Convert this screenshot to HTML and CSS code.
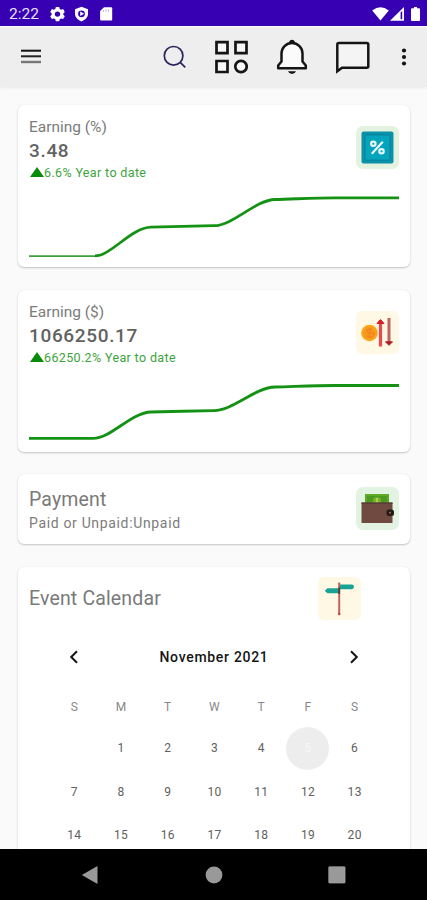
FILE: index.html
```html
<!DOCTYPE html>
<html lang="en">
<head>
<meta charset="utf-8">
<title>Dashboard</title>
<link rel="stylesheet" href="styles.css">
</head>
<body>
<div class="screen">
  <header class="status">
    <span class="clock">2:22</span>
    <svg class="status-left" width="64" height="16" viewBox="0 0 64 16" fill="#fff">
      <path fill-rule="evenodd" d="M5.800 1h3.400l.5 2 1.400.8 2-.7L14.800 6l-1.500 1.400v1.400l1.500 1.400-1.700 2.800-2-.6-1.400.8-.5 2H5.800l-.5-2-1.400-.8-2 .6L.2 10.200l1.500-1.400V7.400L.2 6l1.700-2.900 2 .7L5.300 3zM7.500 5.400a2.700 2.700 0 1 0 0 5.400 2.700 2.700 0 0 0 0-5.400z"/>
      <path fill-rule="evenodd" d="M31.500 .8 38 3.200v4.600c0 3.500-2.700 6-6.500 7.600C27.700 13.800 25 11.300 25 7.800V3.200zM31.500 4.400a3.400 3.400 0 1 0 0 6.800 3.400 3.400 0 0 0 0-6.800z"/>
      <path d="M30.200 5.500v4.600l3.900-2.300z"/>
      <path d="M54 1.200h7.200q1 0 1 1v11.400q0 1-1 1H51.100q-1 0-1-1V5z"/>
      <path d="M53.400 4v2M56 3.300v2.500M58.500 3.300v2.500" stroke="#3700b3" stroke-width=".7" opacity=".4"/>
    </svg>
    <svg class="status-right" width="50" height="16" viewBox="0 0 50 16" fill="#fff">
      <path d="M.2 4.500Q8.500-2 16.800 4.500L8.500 14.500z"/>
      <path d="M18 14.800 32 1v13.800z"/>
      <path d="M28.600 6.500v6.800h1.600v-8.300z" fill="#3700b3"/>
      <path d="M42 1h3v1.200h2q1 0 1 1V14q0 1-1 1h-7q-1 0-1-1V3.200q0-1 1-1h2z"/>
    </svg>
  </header>

  <nav class="appbar">
    <svg class="menu" width="20" height="16" viewBox="0 0 20 16"><path d="M0 1.700h20" stroke="#111" stroke-width="2"/><path d="M0 7.300h20" stroke="#222" stroke-width="2"/><path d="M0 13h20" stroke="#777" stroke-width="2.400"/></svg>
    <svg class="search" width="24" height="24" viewBox="0 0 24 24" fill="none" stroke="#29265c" stroke-width="1.700"><circle cx="10.600" cy="10.800" r="9.300"/><path d="m17.200 17.400 5 5"/></svg>
    <svg class="apps" width="34" height="34" viewBox="0 0 34 34" fill="#f7f7f7" stroke="#151515" stroke-width="2.700"><path d="M2.500 2.200h11v11h-11zM21.500 2.200h11v11h-11zM2.500 21h11v11h-11z"/><circle cx="27" cy="26.500" r="5.700"/></svg>
    <svg class="bell" width="32" height="36" viewBox="0 0 32 36"><path d="M12.800 3.200Q14 .8 16 .8t3.200 2.400zM12 32.300h8Q19 35 16 35t-4-2.700z" fill="#151515"/><path d="M2.200 29.200v-2.700l3.300-4V14.500a10.500 10.500 0 0 1 21 0v8l3.300 4v2.700z" fill="#fbfbfb" stroke="#151515" stroke-width="2.500" stroke-linejoin="round"/></svg>
    <svg class="chat" width="36" height="34" viewBox="0 0 36 34"><path d="M2.300 30.300V3.500q0-1.500 1.500-1.500h28q1.500 0 1.500 1.500v21.700q0 1.500-1.500 1.500H7z" fill="#f4f4f4" stroke="#151515" stroke-width="2.500"/></svg>
    <svg class="more" width="6" height="20" viewBox="0 0 6 20" fill="#151515"><circle cx="3" cy="3.500" r="2.100"/><circle cx="3" cy="10" r="2.100"/><circle cx="3" cy="16.500" r="2.100"/></svg>
  </nav>

  <main class="content">
    <section class="card earning">
      <div class="card-head">
        <div>
          <h2 class="label">Earning (%)</h2>
          <p class="value">3.48</p>
          <p class="trend"><i class="up"></i><span>6.6% Year to date</span></p>
        </div>
        <svg class="tile" width="43" height="43" viewBox="0 0 43 43"><rect width="43" height="43" rx="7" fill="#e3f3e0"/><rect x="5.500" y="5.500" width="32" height="32" rx="2" fill="#0b91a8"/><rect x="9" y="9" width="25" height="25" rx="1" fill="#05a4bd" stroke="#087e98" stroke-width=".8"/><g fill="none" stroke="#e9f8fa" stroke-width="2.200"><circle cx="17.300" cy="17.800" r="2.200"/><circle cx="25.500" cy="25.300" r="2.200"/><path d="m26.800 15.800-11 12"/></g></svg>
      </div>
      <svg class="chart" width="370" height="70" viewBox="0 0 370 70" fill="none" stroke="#149214" stroke-width="2.800"><path d="M0 66.200h67" stroke-width="1.700" stroke="#3f9f3f"/><path d="M66 65.900C82 65.900 102 37.700 122 37.200S165 36 185 35.700C204 35.700 226 10 246 9.500S286 7.800 306 7.800H370"/></svg>
    </section>

    <section class="card earning">
      <div class="card-head">
        <div>
          <h2 class="label">Earning ($)</h2>
          <p class="value">1066250.17</p>
          <p class="trend"><i class="up"></i><span>66250.2% Year to date</span></p>
        </div>
        <svg class="tile" width="43" height="43" viewBox="0 0 43 43"><rect width="43" height="43" rx="6" fill="#fff8e5"/><circle cx="13.500" cy="22" r="8.300" fill="#faa51b"/><circle cx="13.500" cy="22" r="6" fill="#f7981e"/><path d="M16 18.500q-5-1.500-5 1.200t5 2.500-1 4.200l-4-.8M13.600 17v10" fill="none" stroke="#ee8420" stroke-width="1.300"/><path d="M24.500 35.500V11" stroke="#e94b4b" stroke-width="3.200"/><path d="M21 12.500 24.500 8.500l3.500 4z" fill="#d51f27" stroke="#d51f27"/><path d="M33 7V31" stroke="#bd6562" stroke-width="3"/><path d="m29.500 30.800 3.500 3.500 3.500-3.500z" fill="#af1c23" stroke="#af1c23"/></svg>
      </div>
      <svg class="chart" width="370" height="70" viewBox="0 0 370 70" fill="none" stroke="#149214" stroke-width="2.800"><path d="M0 63.400H64C82 63.400 102 37.500 122 37S165 36 185 35.600C204 35.600 226 12.500 246 12S286 10.500 306 10.500H370"/></svg>
    </section>

    <section class="card payment">
      <div>
        <h2 class="title">Payment</h2>
        <p class="sub">Paid or Unpaid:Unpaid</p>
      </div>
      <svg class="tile" width="43" height="43" viewBox="0 0 43 43"><rect width="43" height="43" rx="7" fill="#e2f4e1"/><path d="M9 7h24v9H9z" fill="#5eaa28"/><path d="M11 9h20v7H11z" fill="#4b9b22"/><circle cx="21" cy="14" r="4" fill="#72b52e"/><path d="M21 11v5" stroke="#d5ce48" stroke-width="1.600"/><path d="M5.500 15.500h31v20.500h-31z" fill="#704a40"/><path d="M5.500 15.500h31v1.500h-31z" fill="#593c35"/><rect x="30.500" y="22.500" width="7.500" height="6.500" rx="2.500" fill="#241a18"/><circle cx="34" cy="25.800" r="1" fill="#a06857"/></svg>
    </section>

    <section class="card events">
      <div class="events-head">
        <h2 class="title">Event Calendar</h2>
        <svg class="tile" width="43" height="43" viewBox="0 0 43 43"><rect width="43" height="43" rx="6" fill="#fff8e5"/><path d="M21.200 5.500v32" stroke="#c66059" stroke-width="2"/><path d="M22 7.500h11.500q2.500 0 2.500 2.300t-2.500 2.400H22zM21 11.300H9.500L6.700 13.800l2.800 2.500H21z" fill="#16a394"/><path d="M21.200 10.500v6.500" stroke="#65362f" stroke-width="1.800"/><circle cx="21.200" cy="37" r="1.200" fill="#b74642"/></svg>
      </div>
      <div class="month">
        <svg width="10" height="14" viewBox="0 0 10 14" fill="none" stroke="#151515" stroke-width="2"><path d="M8 1.200 2.200 7 8 12.800"/></svg>
        <h3>November 2021</h3>
        <svg width="10" height="14" viewBox="0 0 10 14" fill="none" stroke="#151515" stroke-width="2"><path d="M2 1.200 7.800 7 2 12.800"/></svg>
      </div>
      <div class="week weekdays"><span>S</span><span>M</span><span>T</span><span>W</span><span>T</span><span>F</span><span>S</span></div>
      <div class="week"><span></span><span>1</span><span>2</span><span>3</span><span>4</span><span class="today">5</span><span>6</span></div>
      <div class="week"><span>7</span><span>8</span><span>9</span><span>10</span><span>11</span><span>12</span><span>13</span></div>
      <div class="week"><span>14</span><span>15</span><span>16</span><span>17</span><span>18</span><span>19</span><span>20</span></div>
    </section>
  </main>

  <footer class="navbar">
    <svg width="18" height="20" viewBox="0 0 18 20"><path d="M.8 10 16.500 1v18z" fill="#999"/></svg>
    <svg width="18" height="20" viewBox="0 0 18 20"><circle cx="9" cy="10" r="8.400" fill="#999"/></svg>
    <svg width="18" height="20" viewBox="0 0 18 20"><rect x=".7" y="1.700" width="16.400" height="16.400" rx=".8" fill="#999" stroke="#aaa" stroke-width=".6"/></svg>
  </footer>
</div>
</body>
</html>
```
FILE: styles.css
```css
* { box-sizing: border-box; }
body, h2, h3, p { margin: 0; font-weight: 400; }
body { font-family: Roboto, "Liberation Sans", sans-serif; color: #757575; }
svg { display: block; flex: none; }

.screen { width: 427px; height: 900px; display: flex; flex-direction: column; overflow: hidden; background: #fafafa; }

.status { height: 26px; flex: none; display: flex; align-items: center; padding: 2px 6px 0 9px; background: #3700b3; color: #fff; }
.clock { width: 42px; font-size: 15.5px; line-height: 20px; color: #e9e2f7; }
.status-right { margin-left: auto; margin-right: -1px; }
.status-left { margin-left: -1px; }

.appbar { height: 61px; flex: none; display: flex; align-items: center; padding-left: 21px; background: #eee; border-top: 1px solid #fafafa; box-shadow: 0 1px 3px rgba(0, 0, 0, .07); }
.search { margin-left: 122px; }
.apps { margin-left: 27px; }
.bell { margin-left: 28px; }
.chat { margin-left: 27px; margin-top: 2px; }
.more { margin-left: 30px; }

.content { flex: 1; min-height: 0; overflow: hidden; padding: 18px 17px 0 18px; display: flex; flex-direction: column; }
.card { flex: none; background: #fff; border-radius: 6px; box-shadow: 0 1px 2px rgba(0, 0, 0, .22), 0 0 1px rgba(0, 0, 0, .08); padding: 0 11px; }

.earning { height: 162px; margin-bottom: 23px; }
.card-head { height: 85px; display: flex; justify-content: space-between; padding-top: 12px; }
.card-head .tile { margin-top: 9px; }
.label { font-size: 15.5px; line-height: 20px; letter-spacing: -.02px; color: #7c7c7c; }
.value { font-size: 19px; line-height: 27px; font-weight: 500; letter-spacing: .65px; color: #626262; }
.trend { display: flex; align-items: center; font-size: 12.5px; line-height: 17px; letter-spacing: .36px; color: #3ca33c; }
.up { width: 14px; height: 10px; margin-left: 1px; margin-top: -1px; background: #098c09; clip-path: polygon(50% 0, 100% 100%, 0 100%); }

.payment { height: 70px; margin: -1px 0 23px; display: flex; justify-content: space-between; padding-top: 13px; }
.title { font-size: 19.5px; line-height: 25px; letter-spacing: .15px; color: #7a7a7a; }
.sub { font-size: 14px; line-height: 22px; letter-spacing: .66px; color: #7c7c7c; }

.events { height: 320px; }
.events-head { display: flex; justify-content: space-between; align-items: center; height: 63px; padding-right: 38px; }
.month { display: flex; justify-content: space-between; align-items: center; height: 52px; padding: 2px 40px 0; color: #151515; }
.month h3 { font-size: 14px; font-weight: 500; letter-spacing: .7px; }
.week { display: grid; grid-template-columns: repeat(7, 1fr); width: 327px; height: 43.5px; margin-left: 22px; align-items: center; justify-items: center; font-size: 12px; letter-spacing: .3px; color: #606060; }
.weekdays { height: 44.5px; padding-top: 5px; color: #888; }
.today { width: 43px; height: 43px; border-radius: 50%; background: #ededed; color: #f7f7f7; display: grid; place-items: center; }

.navbar { height: 51px; flex: none; display: flex; justify-content: space-between; align-items: center; padding: 0 81px; background: #000; }
```
